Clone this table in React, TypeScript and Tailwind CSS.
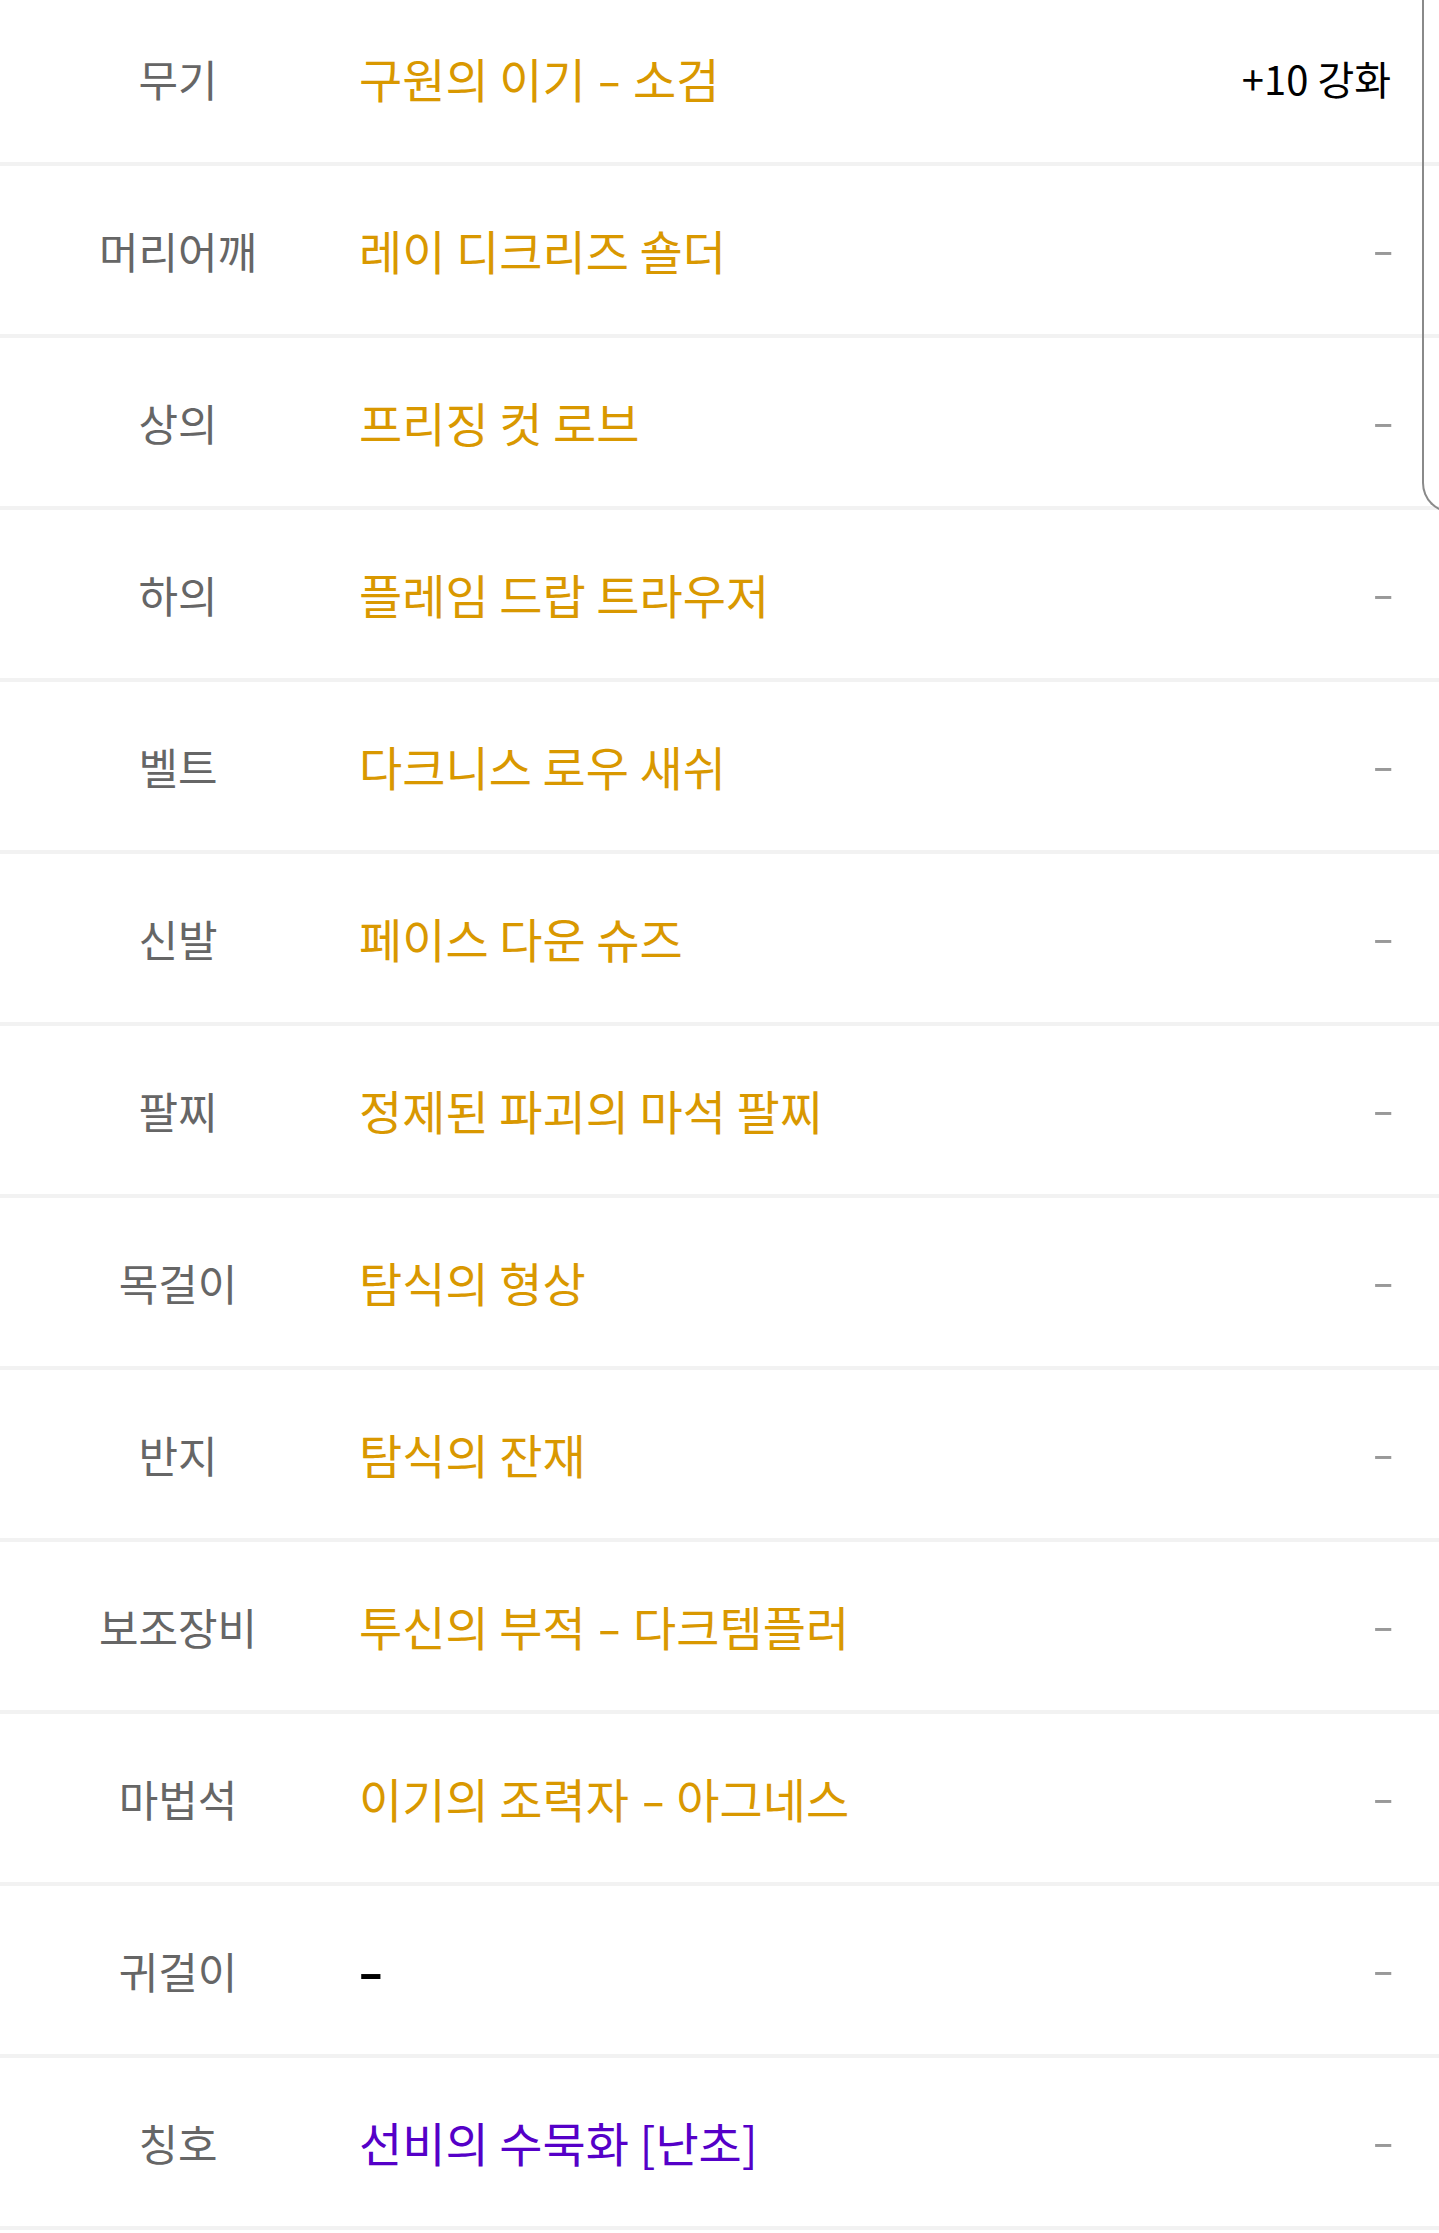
const rows = [
  { slot: "무기", name: "구원의 이기 - 소검", tone: "gold", extra: "+10 강화" },
  { slot: "머리어깨", name: "레이 디크리즈 숄더", tone: "gold" },
  { slot: "상의", name: "프리징 컷 로브", tone: "gold" },
  { slot: "하의", name: "플레임 드랍 트라우저", tone: "gold" },
  { slot: "벨트", name: "다크니스 로우 새쉬", tone: "gold" },
  { slot: "신발", name: "페이스 다운 슈즈", tone: "gold" },
  { slot: "팔찌", name: "정제된 파괴의 마석 팔찌", tone: "gold" },
  { slot: "목걸이", name: "탐식의 형상", tone: "gold" },
  { slot: "반지", name: "탐식의 잔재", tone: "gold" },
  { slot: "보조장비", name: "투신의 부적 - 다크템플러", tone: "gold" },
  { slot: "마법석", name: "이기의 조력자 - 아그네스", tone: "gold" },
  { slot: "귀걸이", name: "-", tone: "none" },
  { slot: "칭호", name: "선비의 수묵화 [난초]", tone: "purple" },
];

// the hyphen is drawn wider in the original font
function Dash({ spaced }: { spaced: boolean }) {
  return <span className={`inline-block scale-x-150 ${spaced ? "mx-[5px]" : "ml-[3px]"}`}>-</span>;
}

function ItemName({ name }: { name: string }) {
  const parts = name.split("-");
  return (
    <>
      {parts.map((p, i) => (
        <span key={i}>
          {i > 0 && <Dash spaced={parts.length > 1 && name.length > 1} />}
          {p}
        </span>
      ))}
    </>
  );
}

function EquipRow({ slot, name, tone, extra }: { slot: string; name: string; tone: string; extra?: string }) {
  const nameColor =
    tone === "gold" ? "text-[#d99800]" : tone === "purple" ? "text-[#5500c8]" : "text-black font-bold";
  return (
    <div className="flex h-[172px] items-center border-b-4 border-[#f2f2f2]">
      <div className="w-[356px] text-center text-[43px] text-[#666666]">{slot}</div>
      <div className={`flex-1 pl-[3px] text-[47px] ${nameColor}`}>
        <ItemName name={name} />
      </div>
      <div className="pr-[48px]">
        {extra ? (
          <span className="text-[40px] text-black">{extra}</span>
        ) : (
          <span className="relative top-[-4px] inline-block scale-x-150 text-[42px] text-[#999999]">-</span>
        )}
      </div>
    </div>
  );
}

export default function App() {
  return (
    <div
      className="relative h-[2233px] w-full overflow-hidden bg-white"
      style={{ fontFamily: '"Noto Sans CJK KR", "Noto Sans", sans-serif' }}
    >
      <div className="mt-[-6px]">
        {rows.map((r) => (
          <EquipRow key={r.slot} {...r} />
        ))}
      </div>
      {/* edge of the overlay panel on the right */}
      <div className="pointer-events-none absolute left-[1422px] top-[-40px] h-[553px] w-[80px] rounded-bl-[30px] border-b-2 border-l-2 border-[#8a8a8a]" />
    </div>
  );
}
